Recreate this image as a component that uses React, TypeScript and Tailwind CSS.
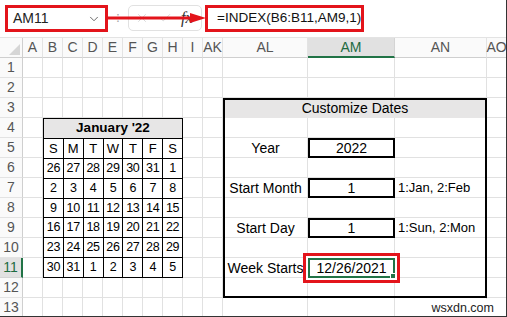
import { Fragment } from "react";
import { ChevronDown, X, Check } from "lucide-react";

const columns = ["A", "B", "C", "D", "E", "F", "G", "H", "I", "AK", "AL", "AM", "AN", "AO"];
const rows = [1, 2, 3, 4, 5, 6, 7, 8, 9, 10, 11, 12, 13];

const weeks = [
  [26, 27, 28, 29, 30, 31, 1],
  [2, 3, 4, 5, 6, 7, 8],
  [9, 10, 11, 12, 13, 14, 15],
  [16, 17, 18, 19, 20, 21, 22],
  [23, 24, 25, 26, 27, 28, 29],
  [30, 31, 1, 2, 3, 4, 5],
];

const sheetGrid =
  "grid grid-cols-[23px_repeat(10,20px)_85px_87px_92px_20px] grid-rows-[repeat(14,20px)]";

const FormulaBar = () => (
  <div className="relative flex h-[38px] items-start border-b border-[#e3e3e3] bg-white">
    {/* Name box */}
    <div className="ml-[5px] mt-[5px] flex h-[27px] w-[103px] items-center justify-between border-[3px] border-[#e3141b] pl-[5px] pr-[4px]">
      <span className="text-[14px] text-[#222]">AM11</span>
      <ChevronDown size={14} strokeWidth={1.5} className="text-[#555]" />
    </div>
    <div className="mt-[7px] flex w-[20px] justify-center text-[14px] text-[#aaa]">:</div>
    {/* cancel / enter / fx */}
    <div className="mt-[5px] flex h-[26px] w-[74px] items-center rounded-[5px] border border-[#e1e1e1] pl-[6px]">
      <X size={14} strokeWidth={1.2} className="text-[#c8c8c8]" />
      <Check size={14} strokeWidth={1.2} className="ml-[9px] text-[#c8c8c8]" />
      <span className="ml-[9px] font-['Liberation_Serif',serif] text-[16px] italic text-[#333]">fx</span>
    </div>
    {/* formula */}
    <div className="ml-[3px] mt-[5px] flex h-[27px] w-[159px] items-center border-[3px] border-[#e3141b] pl-[9px]">
      <span className="text-[13.5px] text-[#111]">=INDEX(B6:B11,AM9,1)</span>
    </div>
    {/* red pointer arrow */}
    <svg
      className="pointer-events-none absolute left-[108px] top-[12px]"
      width="100"
      height="12"
      viewBox="0 0 100 12"
    >
      <line x1="0" y1="6" x2="86" y2="6" stroke="#e3141b" strokeWidth="3" />
      <polygon points="82,1 98,6 82,11" fill="#e3141b" />
    </svg>
  </div>
);

const GridLayer = () => (
  <div className={`${sheetGrid} [grid-area:1/1]`}>
    {/* corner */}
    <div className="flex items-end justify-end border-r border-b border-[#cfcfcf] bg-[#fafafa] p-[2px]">
      <svg width="11" height="11" viewBox="0 0 11 11">
        <polygon points="11,0 11,11 0,11" fill="#d6d6d6" />
      </svg>
    </div>
    {columns.map((c) =>
      c === "AM" ? (
        <div
          key={c}
          className="flex items-center justify-center border-r border-b-2 border-r-[#d4d4d4] border-b-[#217346] bg-[#e1e1e1] text-[14px] text-[#1e6b41]"
        >
          {c}
        </div>
      ) : (
        <div
          key={c}
          className="flex items-center justify-center border-r border-b border-r-[#e3e3e3] border-b-[#cfcfcf] bg-[#fafafa] text-[14px] text-[#555]"
        >
          {c}
        </div>
      )
    )}
    {rows.map((r) => (
      <Fragment key={r}>
        {r === 11 ? (
          <div className="flex items-center justify-center border-r-2 border-b border-r-[#217346] border-b-[#d4d4d4] bg-[#e1e1e1] text-[14px] text-[#1e6b41]">
            {r}
          </div>
        ) : (
          <div className="flex items-center justify-center border-r border-b border-r-[#cfcfcf] border-b-[#e3e3e3] bg-[#fafafa] text-[14px] text-[#555]">
            {r}
          </div>
        )}
        {columns.map((c) => (
          <div key={c} className="border-r border-b border-[#e1e1e1]" />
        ))}
      </Fragment>
    ))}
  </div>
);

const Calendar = () => (
  <div className="col-start-3 col-end-10 row-start-5 row-end-13 grid grid-cols-7 grid-rows-8 border-l border-t border-black bg-white text-black">
    <div className="col-span-7 flex items-center justify-center border-r border-b border-black bg-[#e7e6e6] text-[13.5px] font-bold">
      January '22
    </div>
    {["S", "M", "T", "W", "T", "F", "S"].map((d, i) => (
      <div key={i} className="flex items-center justify-center border-r border-b border-black text-[13px]">
        {d}
      </div>
    ))}
    {weeks.flat().map((n, i) => (
      <div key={i} className="flex items-center justify-center border-r border-b border-black text-[12.5px] tracking-[-0.3px]">
        {n}
      </div>
    ))}
  </div>
);

const ContentLayer = () => (
  <div className={`${sheetGrid} [grid-area:1/1] text-[14px] text-black`}>
    <Calendar />

    {/* Customize Dates panel */}
    <div className="col-start-12 col-end-15 row-start-4 flex items-center justify-center bg-[#e7e6e6]">
      Customize Dates
    </div>

    <div className="col-start-12 row-start-6 flex items-center justify-center">Year</div>
    <div className="col-start-13 row-start-6 flex items-center justify-center border-2 border-black bg-white">
      2022
    </div>

    <div className="col-start-12 row-start-8 flex items-center justify-center">Start Month</div>
    <div className="col-start-13 row-start-8 flex items-center justify-center border-2 border-black bg-white">
      1
    </div>
    <div className="col-start-14 row-start-8 flex items-center pl-[3px] text-[13px]">1:Jan, 2:Feb</div>

    <div className="col-start-12 row-start-10 flex items-center justify-center">Start Day</div>
    <div className="col-start-13 row-start-10 flex items-center justify-center border-2 border-black bg-white">
      1
    </div>
    <div className="col-start-14 row-start-10 flex items-center pl-[3px] text-[13px]">1:Sun, 2:Mon</div>

    <div className="col-start-12 row-start-12 flex items-center justify-center whitespace-nowrap">
      Week Starts
    </div>
    <div className="col-start-13 row-start-12 -m-[5px] flex border-[3px] border-[#e3141b] bg-white p-[2px]">
      <div className="relative flex flex-1 items-center justify-center border-2 border-[#217346]">
        12/26/2021
        <span className="absolute -bottom-[3px] -right-[3px] h-[6px] w-[6px] border border-white bg-[#217346]" />
      </div>
    </div>

    <div className="col-start-12 col-end-15 row-start-4 row-end-14 border-2 border-black" />

    {/* watermark */}
    <div className="col-start-14 col-end-16 row-start-14 flex items-center justify-end">
      <span className="mr-[12px] bg-white px-[1px] text-[12.5px] text-[#222]">wsxdn.com</span>
    </div>
  </div>
);

export default function App() {
  return (
    <div className="h-[317px] w-[507px] overflow-hidden border-r border-b border-[#333] bg-white font-['Liberation_Sans',Arial,sans-serif]">
      <FormulaBar />
      <div className="grid">
        <GridLayer />
        <ContentLayer />
      </div>
    </div>
  );
}
